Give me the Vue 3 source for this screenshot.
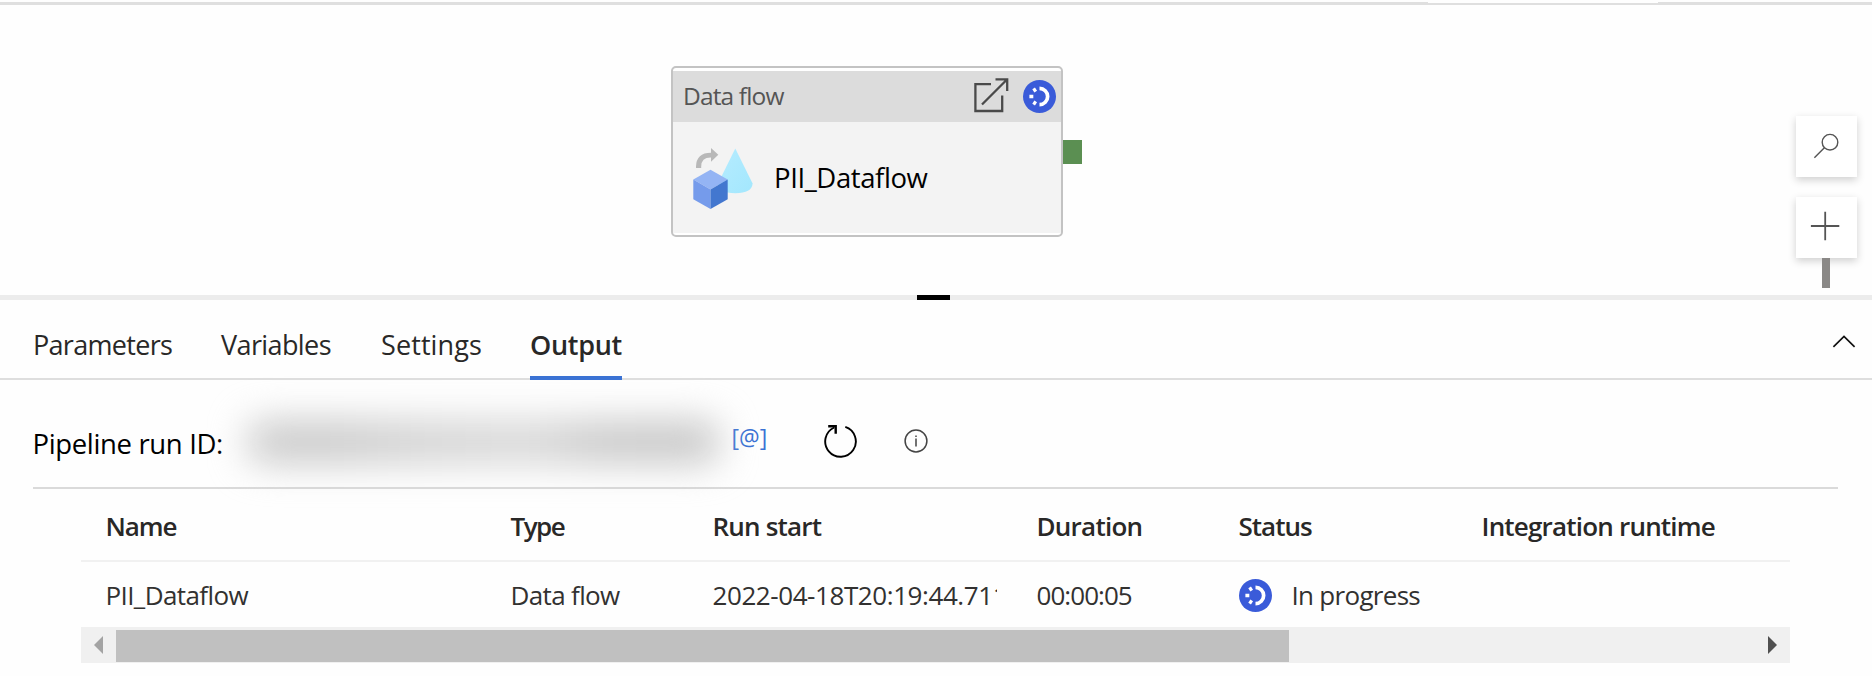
<script setup>
import { h } from 'vue'

const tabs = [
  { key: 'parameters', label: 'Parameters' },
  { key: 'variables', label: 'Variables' },
  { key: 'settings', label: 'Settings' },
  { key: 'output', label: 'Output', active: true },
]

const columns = [
  { key: 'name', label: 'Name' },
  { key: 'type', label: 'Type' },
  { key: 'start', label: 'Run start' },
  { key: 'duration', label: 'Duration' },
  { key: 'status', label: 'Status' },
  { key: 'runtime', label: 'Integration runtime' },
]

const run = {
  name: 'PII_Dataflow',
  type: 'Data flow',
  start: '2022-04-18T20:19:44.711',
  duration: '00:00:05',
  status: 'In progress',
  runtime: '',
}

const ProgressIcon = () =>
  h('svg', { viewBox: '0 0 32 32', width: 33, height: 33 }, [
    h('circle', { cx: 16, cy: 16, r: 16, fill: '#3a5bd9' }),
    h('path', { d: 'M16 8.1 A7.9 7.9 0 0 1 16 23.9', fill: 'none', stroke: '#fff', 'stroke-width': 3.6 }),
    h('path', {
      d: 'M12.6 8.9 L10 10.5 M8.1 14.2 V17.8 M10 21.5 L12.6 23.1',
      fill: 'none',
      stroke: '#fff',
      'stroke-width': 3.8,
    }),
  ])
</script>

<template>
  <main class="page">
    <section class="canvas">
      <div class="top-line"><span class="top-gap"></span></div>

      <article class="node">
        <header class="node-head">
          <span class="node-type">Data flow</span>
          <svg class="open-icon" width="36" height="36" viewBox="0 0 36 36">
            <path d="M18 6.2 H2.4 V33 H29.2 V17.5 M9 26.5 L34 1.5 M22.5 1.4 H34.2 V13" />
          </svg>
          <ProgressIcon />
        </header>
        <div class="node-body">
          <svg width="62" height="64" viewBox="0 0 62 64">
            <defs>
              <linearGradient id="cone" x1="0" y1="0" x2="1" y2="1">
                <stop offset="0" stop-color="#b6ecff" />
                <stop offset="1" stop-color="#a3e7fd" />
              </linearGradient>
            </defs>
            <path d="M43.3 1.5 L60.6 36.5 Q60 46.2 43.3 46.2 Q26.2 46.2 26 36.5 Z" fill="url(#cone)" />
            <path d="M4 21 V19.5 Q4.3 5.7 19 5.7 V1 L26.3 7.8 L19 14.8 V10.4 Q9.2 10.2 9.2 19.5 V21 Z" fill="#b8b8b8" />
            <path d="M18.5 22.8 L35.7 32.6 L18.5 42.4 L1.3 32.6 Z" fill="#94b4f4" />
            <path d="M1.3 32.6 L18.5 42.4 V62 L1.3 52.2 Z" fill="#759beb" />
            <path d="M35.7 32.6 L18.5 42.4 V62 L35.7 52.2 Z" fill="#4377cf" />
          </svg>
          <span class="node-name">PII_Dataflow</span>
        </div>
        <span class="port"></span>
      </article>

      <div class="tools">
        <button class="tool">
          <svg width="60" height="60" viewBox="0 0 60 60">
            <circle cx="34" cy="25.2" r="7.8" />
            <path d="M28.4 30.7 L18.4 40.7" />
          </svg>
        </button>
        <button class="tool">
          <svg class="plus" width="60" height="60" viewBox="0 0 60 60">
            <path d="M29.2 13.7 V42.2 M14.9 28 H43.3" />
          </svg>
        </button>
        <span class="zoom-track"></span>
      </div>
    </section>

    <div class="splitter"><span class="grip"></span></div>

    <nav class="tabs">
      <a v-for="tab in tabs" :key="tab.key" class="tab" :class="[tab.key, { active: tab.active }]">{{ tab.label }}</a>
      <svg class="chevron" width="24" height="14" viewBox="0 0 24 14">
        <path d="M1.4 11.8 L12 1.4 L22.6 11.8" />
      </svg>
    </nav>

    <section class="run-bar">
      <span class="run-label">Pipeline run ID:</span>
      <span class="redacted"></span>
      <span class="expr">[@]</span>
      <svg class="refresh" width="36" height="36" viewBox="0 0 36 36">
        <path d="M22.3 3.9 A15.3 15.3 0 1 1 11.2 4.5" />
        <path class="head" d="M5.2 3.2 H12.7 V10.8" />
      </svg>
      <svg class="info" width="24" height="24" viewBox="0 0 24 24">
        <circle cx="12" cy="12" r="10.9" />
        <path d="M12 9.6 V17.4 M12 6.6 V8" />
      </svg>
    </section>

    <section class="table">
      <div class="row head-row">
        <span v-for="col in columns" :key="col.key" class="cell" :class="'h-' + col.key">{{ col.label }}</span>
      </div>
      <div class="row">
        <span v-for="col in columns" :key="col.key" class="cell" :class="'c-' + col.key">
          <ProgressIcon v-if="col.key === 'status'" /><span class="value">{{ run[col.key] }}</span>
        </span>
      </div>
      <div class="scrollbar">
        <svg width="9" height="18" viewBox="0 0 9 18"><path d="M9 0 V18 L0 9 Z" fill="#a3a3a3" /></svg>
        <span class="thumb"></span>
        <svg class="right" width="9" height="18" viewBox="0 0 9 18"><path d="M0 0 V18 L9 9 Z" fill="#505050" /></svg>
      </div>
    </section>
  </main>
</template>

<style>
body {
  background: #fff;
}
</style>

<style scoped>
.page {
  width: 1872px;
  height: 676px;
  overflow: hidden;
  background: #fefefe;
  color: #292827;
  font-family: "Open Sans", "Noto Sans", sans-serif;
  display: flex;
  flex-direction: column;
}
.page * {
  box-sizing: border-box;
}
.page svg {
  display: block;
  flex: none;
}
.page span,
.page a {
  white-space: nowrap;
}

.canvas {
  position: relative;
  height: 295px;
  flex: none;
}
.top-line {
  height: 5px;
  border-bottom: 3px solid #dfdfdf;
}
.top-gap {
  display: block;
  width: 230px;
  height: 3px;
  margin-left: 1428px;
  background: #fefefe;
}
.node {
  position: absolute;
  left: 671px;
  top: 65.5px;
  width: 392px;
  height: 171px;
  padding: 3px 0 2px;
  border: 2px solid #c3c3c3;
  border-radius: 5px;
  background: #fff;
}
.node-head {
  height: 51px;
  display: flex;
  align-items: center;
  padding: 0 5px 0 10px;
  background: #dcdcdc;
}
.node-type {
  flex: 1;
  font-size: 24.5px;
  letter-spacing: -0.85px;
  line-height: 50px;
  color: #555;
}
.open-icon {
  margin: 0 14px 1px 0;
  fill: none;
  stroke: #4a4a4a;
  stroke-width: 2.3;
}
.node-body {
  height: 111px;
  display: flex;
  align-items: flex-start;
  padding: 25px 0 0 19px;
  background: #f3f3f3;
}
.node-name {
  margin-left: 20px;
  padding-top: 1px;
  font-size: 27.5px;
  letter-spacing: -0.4px;
  line-height: 60px;
  color: #000;
}
.port {
  position: absolute;
  left: 390px;
  top: 72px;
  width: 18.5px;
  height: 24px;
  background: #5b8f52;
}
.tools {
  position: absolute;
  right: 15px;
  top: 116px;
  display: flex;
  flex-direction: column;
  align-items: center;
}
.tool {
  position: relative;
  z-index: 1;
  width: 61px;
  height: 61px;
  margin-bottom: 20px;
  padding: 0;
  border: 0;
  background: #fff;
  box-shadow: 0 3px 8px rgba(0, 0, 0, 0.19);
}
.tool svg {
  fill: none;
  stroke: #555;
  stroke-width: 1.4;
}
.tool .plus {
  stroke-width: 1.8;
}
.zoom-track {
  width: 8px;
  height: 30px;
  margin: -20px 1px 0 0;
  z-index: 2;
  background: #8a8886;
}

.splitter {
  height: 5px;
  flex: none;
  display: flex;
  background: #ececec;
}
.grip {
  width: 33px;
  height: 5px;
  margin-left: 917px;
  background: #000;
}

.tabs {
  height: 80px;
  flex: none;
  display: flex;
  background: linear-gradient(#dedede, #dedede) 0 78px / 100% 2px no-repeat;
  padding-left: 33px;
}
.tab {
  height: 80px;
  padding-top: 13px;
  font-size: 27px;
  line-height: 64px;
}
.tab.parameters {
  width: 188px;
  letter-spacing: -0.7px;
}
.tab.variables {
  width: 160px;
  letter-spacing: -0.6px;
}
.tab.settings {
  width: 149px;
  letter-spacing: 0.1px;
}
.tab.active {
  width: 92px;
  font-weight: 600;
  letter-spacing: -0.3px;
  border-bottom: 4px solid #3a72d4;
}
.chevron {
  margin: 35px 16.5px 0 auto;
  fill: none;
  stroke: #111;
  stroke-width: 1.7;
}

.run-bar {
  height: 107px;
  flex: none;
  display: flex;
  align-items: center;
  padding: 20px 0 0 32.5px;
}
.run-label {
  width: 208px;
  font-size: 27.5px;
  letter-spacing: -0.35px;
  color: #000;
}
.redacted {
  width: 472px;
  height: 44px;
  margin: -4px 22px 0 6px;
  border-radius: 16px;
  background: linear-gradient(90deg, #cecece, #cacaca 15%, #d4d4d4 38%, #d8d8d8 60%, #cacaca 76%, #c8c8c8);
  filter: blur(18px);
}
.expr {
  width: 83px;
  margin-top: -13px;
  margin-left: -9px;
  font-size: 23px;
  font-weight: 500;
  line-height: 30px;
  color: #3a72d4;
}
.refresh {
  margin-top: -6px;
  margin-left: 8px;
  fill: none;
  stroke: #000;
  stroke-width: 1.9;
}
.refresh .head {
  stroke-width: 2.4;
}
.info {
  margin-top: -5px;
  margin-left: 45px;
  fill: none;
  stroke: #444;
  stroke-width: 1.5;
}

.table {
  width: 1805px;
  margin-left: 33px;
  padding: 0 48px;
  border-top: 2px solid #dadada;
}
.row {
  display: grid;
  grid-template-columns: 405px 202px 324px 202px 243px 1fr;
  height: 65px;
  padding-left: 24.5px;
  line-height: 65px;
  font-size: 26px;
  color: #323130;
}
.value {
  padding-top: 1px;
}
.head-row {
  height: 73px;
  padding-top: 3px;
  line-height: 69px;
  font-weight: 600;
  color: #292827;
  border-bottom: 2px solid #f1f1f1;
}
.cell {
  display: flex;
  align-items: center;
}
.h-name { letter-spacing: -1.1px; }
.h-type { letter-spacing: -1.5px; }
.h-start { letter-spacing: -0.8px; }
.h-duration { letter-spacing: -0.75px; }
.h-status { letter-spacing: -1px; }
.h-runtime { letter-spacing: -0.8px; }
.c-name { letter-spacing: -0.6px; }
.c-type { letter-spacing: -0.65px; }
.c-start {
  width: 284px;
  overflow: hidden;
  letter-spacing: -0.42px;
}
.c-duration { letter-spacing: -0.95px; }
.c-status {
  gap: 20px;
  letter-spacing: -0.7px;
}
.scrollbar {
  height: 36px;
  display: flex;
  align-items: center;
  padding: 0 13px;
  background: #f0f0f0;
}
.thumb {
  width: 1173px;
  height: 32px;
  margin: 2px 0 0 12.5px;
  background: #c0c0c0;
}
.right {
  margin-left: auto;
}
</style>
